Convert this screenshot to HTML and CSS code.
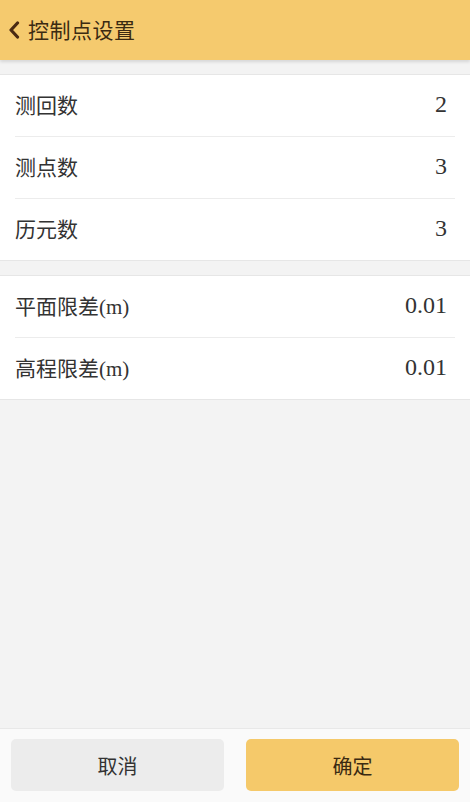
FILE: index.html
```html
<!DOCTYPE html>
<html>
  <head>
    <title>控制点设置</title>
    <link rel="stylesheet" href="styles.css">
  </head>
  <body>
    <div class="page">
      <header class="topbar">
        <svg class="back" width="12" height="18" viewBox="0 0 12 18">
          <path d="M9.5 2 L3 9 L9.5 16" fill="none" stroke="#4a2a12" stroke-width="3.2" stroke-linecap="round" stroke-linejoin="round"/>
        </svg>
        <span class="title">控制点设置</span>
      </header>

      <main class="content">
        <section class="card">
          <div class="row"><span class="label">测回数</span><span class="value">2</span></div>
          <div class="row"><span class="label">测点数</span><span class="value">3</span></div>
          <div class="row"><span class="label">历元数</span><span class="value">3</span></div>
        </section>

        <section class="card">
          <div class="row"><span class="label">平面限差(m)</span><span class="value">0.01</span></div>
          <div class="row"><span class="label">高程限差(m)</span><span class="value">0.01</span></div>
        </section>
      </main>

      <footer class="actions">
        <button type="button" class="btn btn-cancel">取消</button>
        <button type="button" class="btn btn-ok">确定</button>
      </footer>
    </div>
  </body>
</html>
```

FILE: styles.css
```css
html, body {
  margin: 0;
  padding: 0;
  height: 100%;
}

body {
  font-family: "Liberation Serif", "Noto Sans CJK SC", serif;
  background-color: #f3f3f3;
  color: #333;
}

.page {
  display: flex;
  flex-direction: column;
  height: 802px;
}

.topbar {
  display: flex;
  align-items: center;
  gap: 8px;
  height: 60px;
  padding: 0 0 0 8px;
  background-color: #f5ca6e;
  box-shadow: 0 2px 3px rgba(0, 0, 0, 0.12);
  position: relative;
  z-index: 1;
}

.back {
  flex-shrink: 0;
}

.title {
  font-size: 21px;
  color: #3b2a12;
  letter-spacing: 0.5px;
  padding-bottom: 2px;
}

.content {
  flex: 1;
  display: flex;
  flex-direction: column;
  gap: 14px;
  padding-top: 14px;
}

.card {
  background-color: #fff;
  border-top: 1px solid #e6e6e6;
  border-bottom: 1px solid #e6e6e6;
}

.row {
  display: flex;
  justify-content: space-between;
  align-items: center;
  height: 61px;
  margin: 0 15px;
  border-bottom: 1px solid #ececec;
  font-size: 21px;
}

.row:last-child {
  border-bottom: none;
}

.label {
  padding-bottom: 3px;
}

.value {
  padding-right: 8px;
  padding-bottom: 2px;
  font-size: 24px;
}

.actions {
  display: flex;
  gap: 22px;
  padding: 10px 11px 11px;
  background-color: #fafafa;
  border-top: 1px solid #e8e8e8;
}

.btn {
  flex: 1;
  height: 52px;
  border: none;
  border-radius: 5px;
  font-family: "Liberation Serif", "Noto Sans CJK SC", serif;
  font-size: 20px;
  color: #333;
  cursor: pointer;
}

.btn-cancel {
  background-color: #ececec;
}

.btn-ok {
  background-color: #f5c96a;
  color: #3b2a12;
}
```
